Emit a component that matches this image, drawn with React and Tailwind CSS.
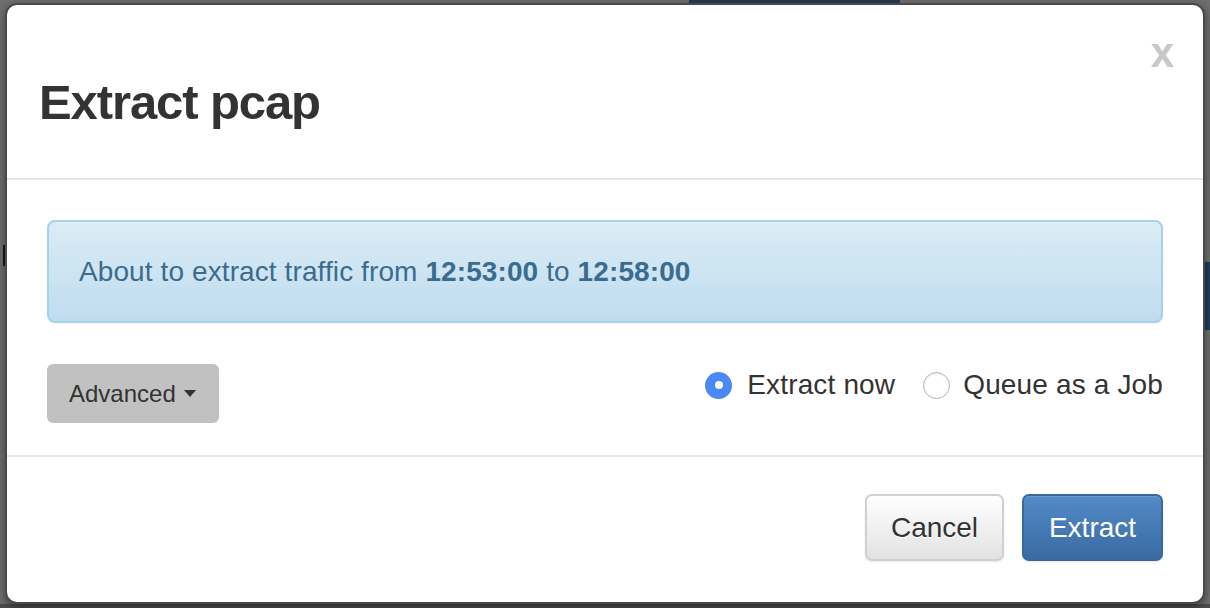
export default function App() {
  const font = { fontFamily: '"Liberation Sans", Arial, Helvetica, sans-serif' };
  return (
    <div
      className="relative w-[1210px] h-[608px] overflow-hidden bg-[#6e6e6e]"
      style={font}
    >
      {/* backdrop details behind the modal */}
      <div className="absolute left-[689px] top-0 w-[211px] h-[5px] bg-[#243a56]" />
      <div className="absolute left-[1204px] top-[262px] w-[6px] h-[68px] bg-[#203b5c]" />
      <div className="absolute left-[3px] top-[245px] w-[3px] h-[21px] bg-[#1a1a1a]" />
      <div className="absolute left-0 top-[604px] w-[1210px] h-[4px] bg-[#4c4c4c]" />

      <div className="relative ml-[5px] mt-[3px] w-[1200px] h-[601px] bg-white border-2 border-[#4a4a4a] rounded-[12px] shadow-[0_3px_9px_rgba(0,0,0,0.45)] flex flex-col">
        {/* Header */}
        <div className="h-[175px] border-b-2 border-[#e6e6e6] flex justify-between items-start pl-[32px] pr-[29px]">
          <h1 className="pt-[73px] text-[49px] leading-none font-bold text-[#333333] tracking-[-1.1px]">
            Extract pcap
          </h1>
          <button className="pt-[27px] text-[42px] leading-none font-bold text-[#c8c8c8]">
            x
          </button>
        </div>

        {/* Body */}
        <div className="px-[40px] pt-[40px] pb-[32px] border-b-2 border-[#e6e6e6]">
          <div className="h-[103px] flex items-center pl-[30px] rounded-[8px] border-2 border-[#a6d1ea] bg-gradient-to-b from-[#dbecf6] to-[#bfdcee] text-[28px] tracking-[0.1px] text-[#3b6c8e] shadow-[inset_0_1px_0_rgba(255,255,255,0.25),0_1px_2px_rgba(0,0,0,0.05)]">
            <span>
              About to extract traffic from <b>12:53:00</b> to <b>12:58:00</b>
            </span>
          </div>

          <div className="mt-[41px] flex justify-between items-start">
            <button className="h-[59px] w-[172px] rounded-[6px] bg-[#c1c1c1] flex items-center pl-[22px] text-[24px] text-[#333333]">
              Advanced
              <span className="ml-[8px] inline-block w-0 h-0 border-t-[7px] border-t-[#333333] border-x-[6.5px] border-x-transparent" />
            </button>

            <div className="h-[42px] flex items-center text-[28px] tracking-[0.15px] text-[#333333]">
              <span className="w-[27px] h-[27px] rounded-full bg-[#4a89f3] flex items-center justify-center">
                <span className="w-[8px] h-[8px] rounded-full bg-white" />
              </span>
              <span className="ml-[15px]">Extract now</span>
              <span className="ml-[28px] w-[27px] h-[27px] rounded-full bg-white border border-[#b3b3b3] shadow-[inset_0_1px_2px_rgba(0,0,0,0.1)]" />
              <span className="ml-[13px]">Queue as a Job</span>
            </div>
          </div>
        </div>

        {/* Footer */}
        <div className="flex-1 flex justify-end items-start pt-[37px] pr-[40px] gap-[18px]">
          <button className="h-[67px] w-[139px] rounded-[7px] border-2 border-[#d0d0d0] bg-gradient-to-b from-[#ffffff] to-[#e2e2e2] text-[28px] text-[#333333] shadow-[0_1px_2px_rgba(0,0,0,0.1)] [text-shadow:0_1px_0_#fff]">
            Cancel
          </button>
          <button className="h-[67px] w-[141px] rounded-[7px] border-2 border-[#3a679e] bg-gradient-to-b from-[#528bc7] to-[#3a6aa2] text-[28px] text-white shadow-[inset_0_1px_0_rgba(255,255,255,0.15),0_1px_2px_rgba(0,0,0,0.1)]">
            Extract
          </button>
        </div>
      </div>
    </div>
  );
}
